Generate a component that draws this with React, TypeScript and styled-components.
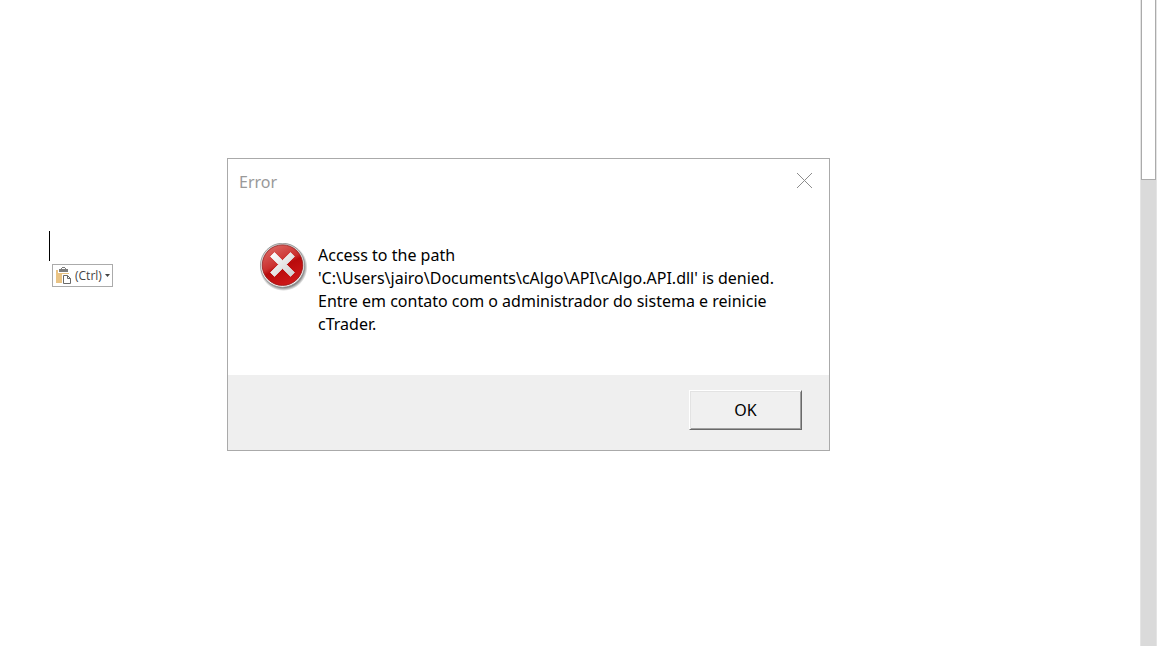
import React from "react";
import styled, { createGlobalStyle } from "styled-components";

const GlobalStyle = createGlobalStyle`
  *, *::before, *::after { box-sizing: border-box; }
  body {
    margin: 0;
    background: #ffffff;
    color: #000000;
    font-family: "Segoe UI", "Noto Sans", sans-serif;
    overflow: hidden;
  }
`;

const Workspace = styled.div`
  position: relative;
  display: flex;
  min-height: 100vh;
`;

const Document = styled.main`
  flex: 1;
  min-width: 0;
  padding: 231px 0 0 49px;
`;

const Caret = styled.div`
  width: 1px;
  height: 30px;
  background: #000000;
`;

const PasteButton = styled.button`
  display: flex;
  align-items: center;
  gap: 3px;
  height: 23px;
  width: 61px;
  margin: 3px 0 0 3px;
  padding: 0 3px;
  border: 1px solid #ababab;
  background: #ffffff;
  color: #444444;
  font: 12px/16px "Segoe UI", "Open Sans", sans-serif;
  white-space: nowrap;

  svg { flex: none; }
`;

const ScrollTrack = styled.div`
  width: 17px;
  background: #dadada;
  border-left: 1px solid #e4e4e4;
  border-right: 1px solid #e4e4e4;
`;

const ScrollThumb = styled.div`
  height: 180px;
  border: 1px solid #ababab;
  border-top: 0;
  background: #ffffff;
`;

const Dialog = styled.section`
  position: absolute;
  top: 158px;
  left: 227px;
  width: 603px;
  border: 1px solid #aaaaaa;
  background: #ffffff;
`;

const TitleBar = styled.header`
  display: flex;
  align-items: flex-start;
  justify-content: space-between;
  height: 44px;
  padding: 14px 17px 0 11px;
`;

const Title = styled.h1`
  margin: 0;
  color: #999999;
  font-size: 16px;
  line-height: 18px;
  font-weight: 400;
`;

const CloseButton = styled.button`
  display: flex;
  padding: 0;
  border: 0;
  background: none;
`;

const Body = styled.div`
  display: flex;
  gap: 10px;
  padding: 40px 40px 39px 30px;
`;

const Message = styled.p`
  margin: 0;
  padding-top: 1px;
  font-size: 16px;
  line-height: 23px;
`;

const Footer = styled.footer`
  display: flex;
  justify-content: flex-end;
  padding: 15px 27px 20px;
  background: #efefef;
`;

const OkButton = styled.button`
  width: 113px;
  height: 40px;
  padding: 0;
  border: 1px solid;
  border-color: #ffffff #696969 #696969 #ffffff;
  box-shadow: inset 1px 1px #e3e3e3, inset -1px -1px #a0a0a0;
  background: #f0f0f0;
  color: #000000;
  font: inherit;
  font-size: 16px;
`;

const PasteIcon = () => (
  <svg width="16" height="17" viewBox="0 0 16 17" aria-hidden="true">
    <path d="M0 3h2v3h11v2H6v8H0z" fill="#e9c384" />
    <path d="M3 2h2V1h1V0h3v1h1v1h2v3H3z" fill="#7c7c7c" />
    <path d="M6 1h3v1H6z" fill="#ffffff" />
    <path d="M6 7h7l3 3v7H6z" fill="#ffffff" />
    <path d="M7.500 8.500h4l3 3v5h-7zM11.500 8.500v3h3" fill="#ffffff" stroke="#6a6a6a" />
  </svg>
);

const ErrorIcon = () => (
  <svg width="50" height="50" viewBox="0 0 50 50" aria-hidden="true">
    <defs>
      <linearGradient id="rim" x1="0" y1="0" x2="0" y2="1">
        <stop offset="0" stopColor="#c9c9c9" />
        <stop offset="0.500" stopColor="#ededed" />
        <stop offset="1" stopColor="#ffffff" />
      </linearGradient>
      <linearGradient id="red" x1="0.200" y1="0" x2="0.700" y2="1">
        <stop offset="0" stopColor="#dc6a66" />
        <stop offset="0.450" stopColor="#cb302e" />
        <stop offset="0.550" stopColor="#b80b0c" />
        <stop offset="1" stopColor="#d01a1a" />
      </linearGradient>
      <linearGradient id="cross" x1="0" y1="0" x2="1" y2="1">
        <stop offset="0" stopColor="#ffffff" />
        <stop offset="0.500" stopColor="#e6e6e6" />
        <stop offset="1" stopColor="#d0d0d0" />
      </linearGradient>
      <radialGradient id="shade">
        <stop offset="0.850" stopColor="#000000" stopOpacity="0.500" />
        <stop offset="1" stopColor="#000000" stopOpacity="0" />
      </radialGradient>
    </defs>
    <circle cx="25.500" cy="24" r="24" fill="url(#shade)" />
    <circle cx="24.500" cy="22.200" r="22" fill="url(#rim)" stroke="#8e8e8e" strokeWidth="0.800" />
    <circle cx="24.500" cy="22.200" r="20.300" fill="url(#red)" stroke="#8c1010" strokeWidth="0.700" />
    <path
      d="M16.500 9.500l8 8 8-8 4 4-8 8 8 8-4 4-8-8-8 8-4-4 8-8-8-8z"
      fill="url(#cross)"
      stroke="url(#cross)"
      strokeWidth="0.800"
      strokeLinejoin="round"
    />
  </svg>
);

export default function App() {
  return (
    <>
      <GlobalStyle />
      <Workspace>
        <Document>
          <Caret />
          <PasteButton type="button">
            <PasteIcon />
            <span>(Ctrl)</span>
            <svg width="5" height="3" viewBox="0 0 5 3" aria-hidden="true">
              <path d="M0 0h5L2.500 3z" fill="#444444" />
            </svg>
          </PasteButton>
        </Document>
        <ScrollTrack>
          <ScrollThumb />
        </ScrollTrack>
        <Dialog role="alertdialog" aria-labelledby="dialog-title" aria-describedby="dialog-message">
          <TitleBar>
            <Title id="dialog-title">Error</Title>
            <CloseButton type="button" aria-label="Close">
              <svg width="15" height="15" viewBox="0 0 15 15" aria-hidden="true">
                <path d="M0 0l15 15M15 0L0 15" stroke="#8c8c8c" />
              </svg>
            </CloseButton>
          </TitleBar>
          <Body>
            <ErrorIcon />
            <Message id="dialog-message">
              Access to the path
              <br />
              'C:\Users\jairo\Documents\cAlgo\API\cAlgo.API.dll' is denied.
              <br />
              Entre em contato com o administrador do sistema e reinicie
              <br />
              cTrader.
            </Message>
          </Body>
          <Footer>
            <OkButton type="button">OK</OkButton>
          </Footer>
        </Dialog>
      </Workspace>
    </>
  );
}
